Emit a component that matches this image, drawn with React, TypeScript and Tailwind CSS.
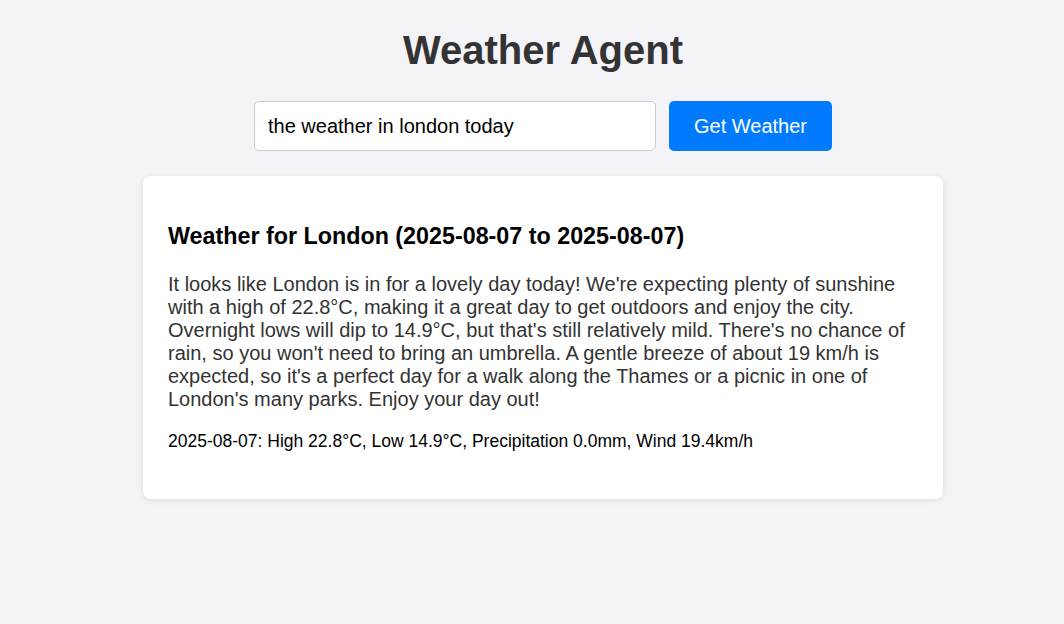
import React from 'react';

const App: React.FC = () => {
  return (
    <div className="min-h-screen bg-[#f4f4f8] font-['Liberation_Sans',Arial,sans-serif] pt-[27px] pl-[22px]">
      <h1 className="text-center text-[40px] leading-[46px] font-bold text-[#333]">Weather Agent</h1>

      <div className="mt-[28px] flex justify-center gap-[13px]">
        <input
          type="text"
          defaultValue="the weather in london today"
          className="w-[402px] h-[50px] rounded-[5px] border border-[#ccc] bg-white pl-[13px] text-[20px] text-black outline-none"
        />
        <button className="w-[163px] h-[50px] rounded-[5px] bg-[#007bff] text-[20px] text-white">
          Get Weather
        </button>
      </div>

      <div className="mx-auto mt-[25px] w-[800px] rounded-[8px] bg-white px-[25px] pt-[47px] pb-[48px] shadow-[0_1px_6px_rgba(0,0,0,0.1)]">
        <h2 className="text-[23.3px] leading-[27px] font-bold text-black">
          Weather for London (2025-08-07 to 2025-08-07)
        </h2>
        <p className="mt-[23px] text-[20px] leading-[23px] text-[#333]">
          It looks like London is in for a lovely day today! We're expecting plenty of sunshine with a high of 22.8°C, making it a great day to get outdoors and enjoy the city. Overnight lows will dip to 14.9°C, but that's still relatively mild. There's no chance of rain, so you won't need to bring an umbrella. A gentle breeze of about 19 km/h is expected, so it's a perfect day for a walk along the Thames or a picnic in one of London's many parks. Enjoy your day out!
        </p>
        <p className="mt-[20px] text-[17.5px] leading-[20px] text-black">
          2025-08-07: High 22.8°C, Low 14.9°C, Precipitation 0.0mm, Wind 19.4km/h
        </p>
      </div>
    </div>
  );
};

export default App;
